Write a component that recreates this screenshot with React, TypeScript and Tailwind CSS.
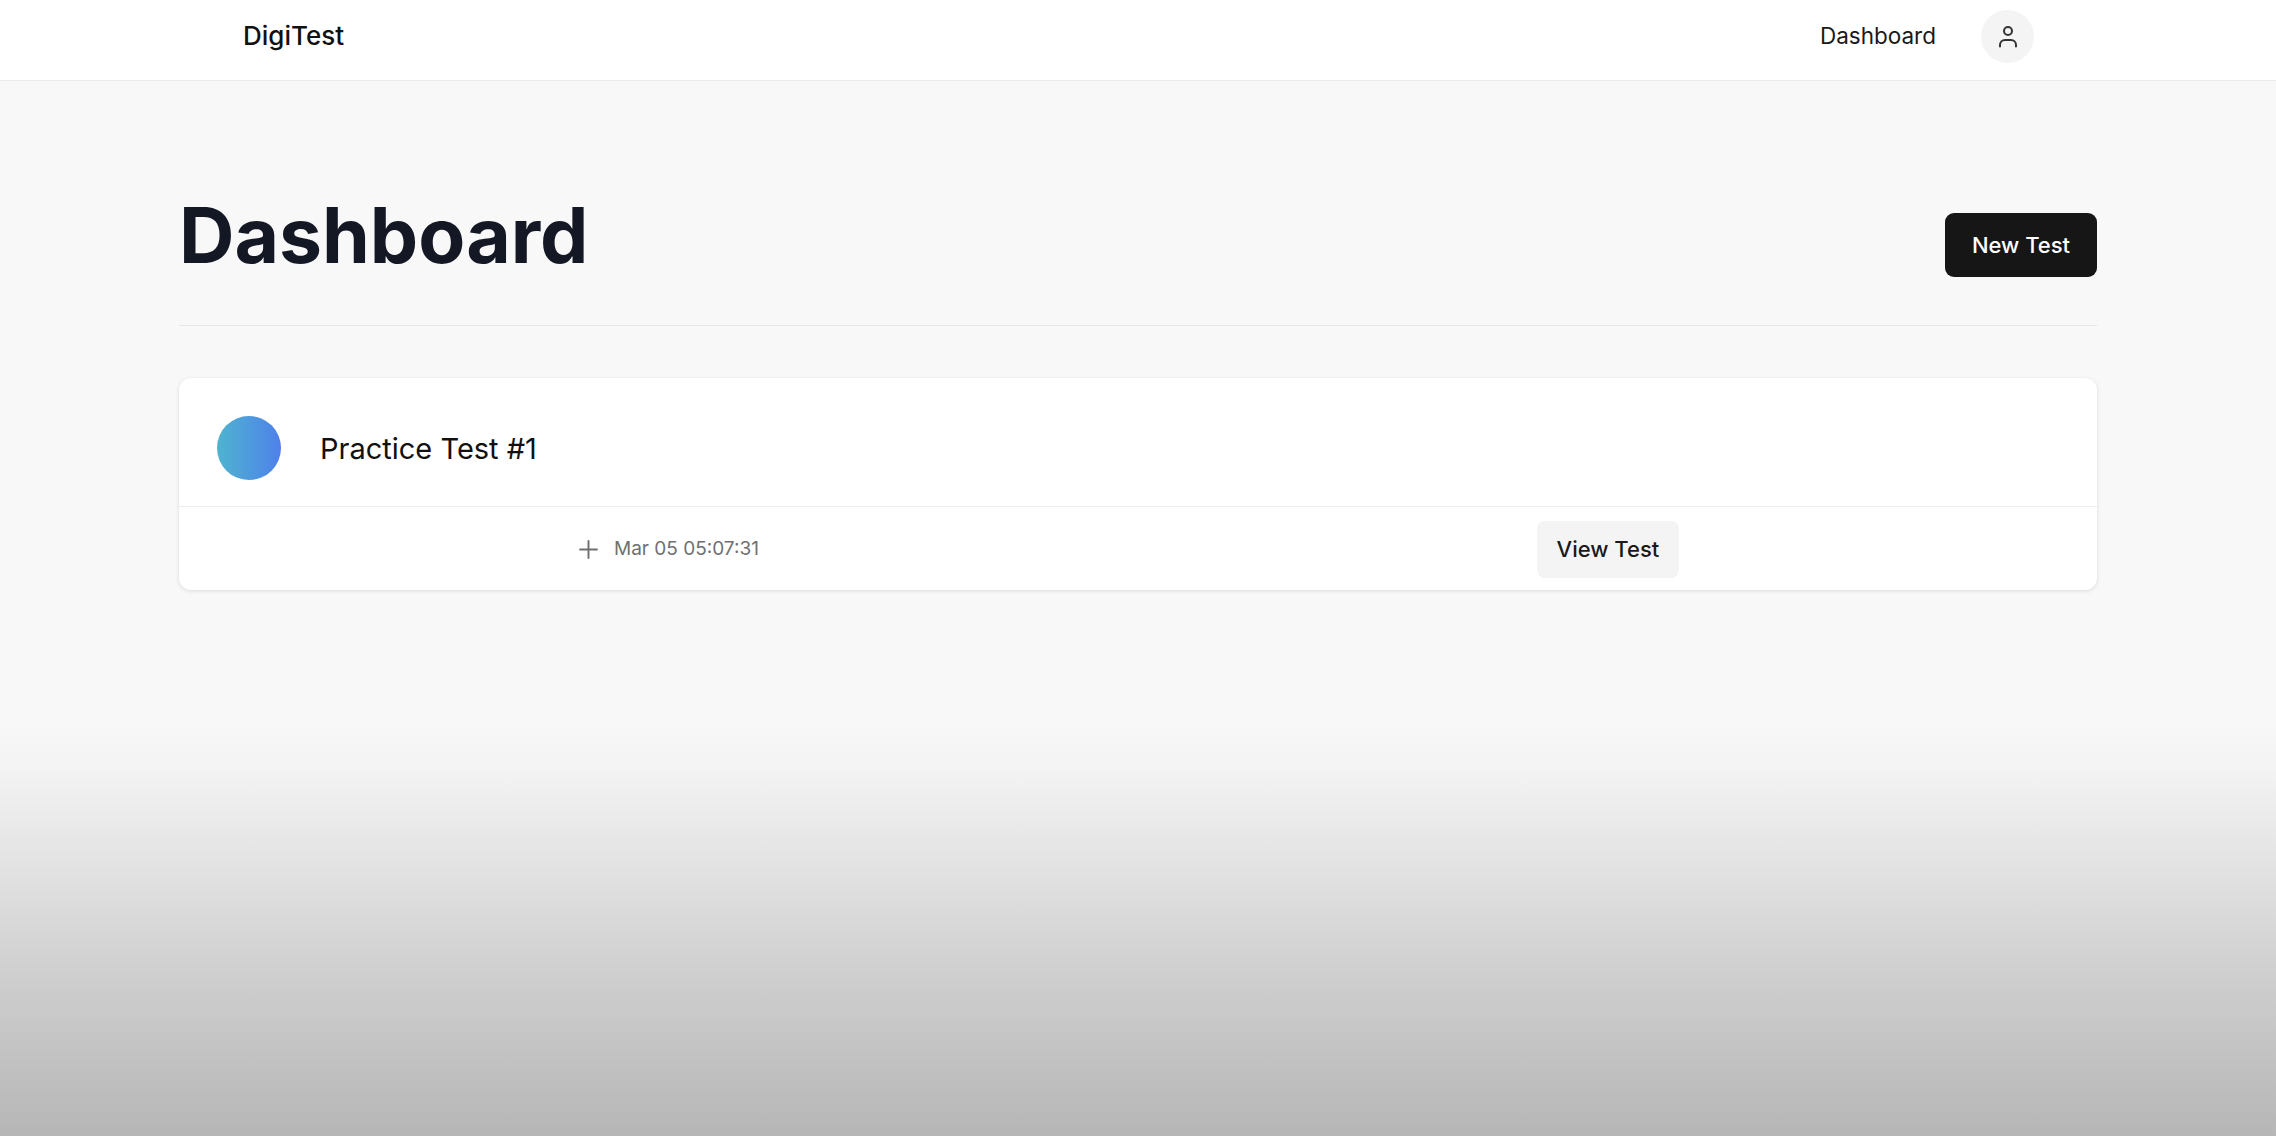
import { Plus } from "lucide-react"

function UserIcon() {
  return (
    <svg width="24" height="24" viewBox="0 0 24 24" fill="none" stroke="currentColor" strokeWidth="2" strokeLinecap="round" className="text-[#333]">
      <circle cx="12" cy="7" r="4" />
      <path d="M4 22.5V21a5 5 0 0 1 5-5h6a5 5 0 0 1 5 5v1.5" />
    </svg>
  )
}

export default function App() {
  return (
    <div className="h-[1136px] overflow-hidden bg-[linear-gradient(180deg,#f8f8f8_0px,#f8f8f8_720px,#f3f3f3_770px,#e0e0e0_880px,#cecece_980px,#b6b6b6_1136px)] font-['Inter',sans-serif]">
      {/* Top nav */}
      <header className="h-[81px] bg-white border-b border-[#ececec] pl-[243px] pr-[242px] pb-2 flex items-center justify-between">
        <div className="text-[26px] font-medium text-[#111] leading-none">DigiTest</div>
        <div className="flex items-center gap-[45px]">
          <a className="text-[22.5px] text-[#1a1a1a] leading-none">Dashboard</a>
          <div className="w-[53px] h-[53px] rounded-full bg-[#f4f4f4] flex items-center justify-center">
            <UserIcon />
          </div>
        </div>
      </header>

      <main className="w-[1918px] mx-auto">
        <div className="flex items-start justify-between h-[245px] border-b border-[#e6e6e6]">
          <h1 className="mt-[117px] text-[76.8px] font-bold text-[#141824] leading-none">Dashboard</h1>
          <button className="mt-[132px] w-[152px] h-[64px] rounded-[9px] bg-[#161616] text-white text-[22px] font-medium">New Test</button>
        </div>

        {/* Test card */}
        <div className="mt-[52px] bg-white rounded-[12px] shadow-[0_1px_4px_rgba(0,0,0,0.12)]">
          <div className="h-[129px] pl-[38px] pt-[11px] flex items-center gap-[39px] border-b border-[#ececec]">
            <div className="w-[64px] h-[64px] rounded-full bg-gradient-to-r from-[#4fb3cf] to-[#4f80ea]" />
            <div className="pt-[2px] text-[29px] text-[#111]">Practice Test #1</div>
          </div>
          <div className="h-[83px] pl-[395px] pt-[1px] flex items-center">
            <div className="flex items-center gap-[11px] text-[#707070]">
              <Plus size={29} strokeWidth={1.6} />
              <span className="text-[19px]">Mar 05 05:07:31</span>
            </div>
            <button className="ml-[778px] w-[142px] h-[57px] rounded-[8px] bg-[#f4f4f4] text-[22px] font-medium text-[#1a1a1a]">View Test</button>
          </div>
        </div>
      </main>
    </div>
  )
}
